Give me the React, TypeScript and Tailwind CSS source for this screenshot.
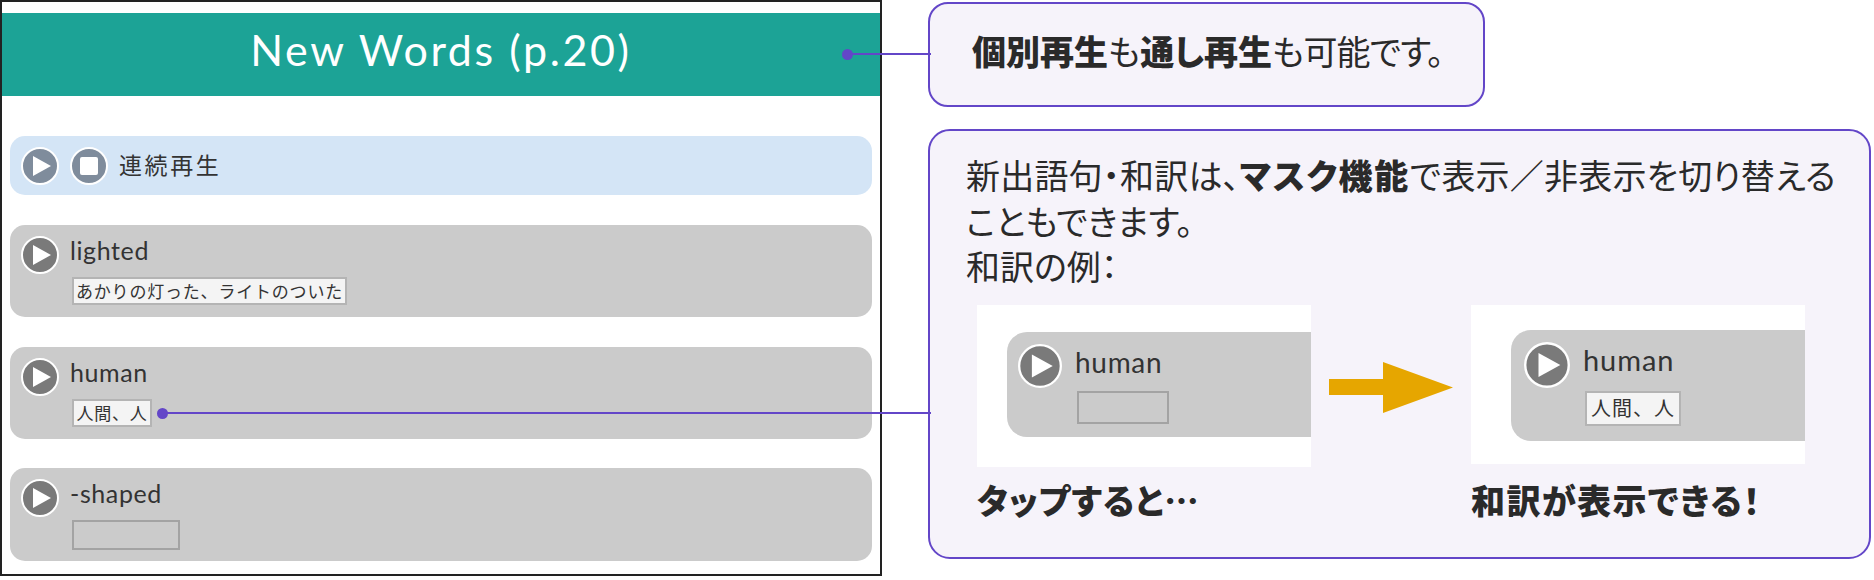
import React from "react";

const CJK = "font-['Noto_Sans_CJK_JP','Noto_Sans',sans-serif]";

function RoundButton({ className, fill = "#7a7a7a", stop = false }: { className: string; fill?: string; stop?: boolean }) {
  return (
    <svg viewBox="0 0 38 38" className={className}>
      <circle cx="19" cy="19" r="18" fill={fill} stroke="#ffffff" strokeWidth="2" />
      {stop ? <rect x="10" y="10" width="18" height="18" rx="2" fill="#ffffff" /> : <polygon points="12,9 30,19 12,29" fill="#ffffff" />}
    </svg>
  );
}

function WordRow({ word, meaning, maskClass, rowClass }: { word: string; meaning?: string; maskClass: string; rowClass: string }) {
  return (
    <div className={`flex rounded-[15px] bg-[#cbcbcb] pl-[11px] pt-[11px] ${rowClass}`}>
      <RoundButton className="h-[38px] w-[38px] shrink-0" />
      <div className="ml-[11px] flex flex-col items-start">
        <div className="flex h-[30px] items-center font-['Lato',sans-serif] text-[25px] tracking-[0.6px] text-[#333333]">{word}</div>
        <div
          className={`ml-[2px] mt-[11px] flex items-center justify-center border-2 ${meaning ? "border-[#b4b4b4] bg-[#f4f4f4]" : "border-[#a3a3a3]"} ${CJK} text-[17px] tracking-[0.8px] text-[#333333] ${maskClass}`}
        >
          {meaning}
        </div>
      </div>
    </div>
  );
}

export default function App() {
  return (
    <div className={`relative flex h-[580px] w-[1874px] overflow-hidden bg-white ${CJK} text-[#2a2a2a]`}>
      <div className="h-[576px] w-[882px] shrink-0 border-2 border-[#222222] bg-white pt-[11px]">
        <div className="flex h-[83px] items-center justify-center bg-[#1ca396] pb-[8px] font-['Lato',sans-serif] text-[43px] tracking-[2.6px] text-white">
          New Words (p.20)
        </div>
        <div className="mx-[8px] mt-[40px] flex flex-col">
          <div className="flex h-[59px] items-center gap-[11px] rounded-[15px] bg-[#d4e5f6] pl-[11px]">
            <RoundButton className="h-[38px] w-[38px] shrink-0" fill="#7f8c9c" />
            <RoundButton className="h-[38px] w-[38px] shrink-0" fill="#7f8c9c" stop />
            <span className="-mt-[3px] text-[23px] tracking-[2.6px] text-[#333333]">連続再生</span>
          </div>
          <WordRow word="lighted" meaning="あかりの灯った、ライトのついた" maskClass="h-[28px] w-[275px]" rowClass="mt-[30px] h-[92px]" />
          <WordRow word="human" meaning="人間、人" maskClass="h-[28px] w-[80px]" rowClass="mt-[30px] h-[92px]" />
          <WordRow word="-shaped" maskClass="h-[30px] w-[108px]" rowClass="mt-[29px] h-[93px]" />
        </div>
      </div>

      <div className="ml-[46px] flex flex-col pt-[2px]">
        <div className="flex h-[105px] w-[557px] rounded-[20px] border-2 border-[#6346c8] bg-[#f6f3fa] pl-[42px] pt-[24px] text-[34px] leading-[45px] [font-feature-settings:'palt']">
          <span><b className="font-black">個別再生</b>も<b className="font-black">通し再生</b><span className="tracking-[-0.8px]">も可能です。</span></span>
        </div>
        <div className="mt-[22px] h-[430px] w-[943px] rounded-[22px] border-2 border-[#6346c8] bg-[#f6f3fa] pl-[36px] pt-[21px]">
          <p className="text-[34px] leading-[45.5px] [font-feature-settings:'palt']">
            <span className="tracking-[0.2px]">新出語句・和訳は、</span><b className="font-black tracking-[1.6px]">マスク機能</b><span className="tracking-[0.2px]">で表示／非表示を切り替える</span><br />
            こともできます。<br />
            和訳の例：
          </p>
          <div className="ml-[11px] mt-[16px] flex items-start">
            <div className="flex w-[334px] flex-col">
              <div className="flex h-[162px] bg-white pl-[30px] pt-[27px]">
                <div className="flex h-[105px] flex-1 rounded-l-[20px] bg-[#cbcbcb] pl-[11px] pt-[12px]">
                  <RoundButton className="h-[44px] w-[44px] shrink-0" />
                  <div className="ml-[13px] flex flex-col items-start">
                    <div className="flex h-[36px] items-center font-['Lato',sans-serif] text-[28px] tracking-[0.7px] text-[#333333]">human</div>
                    <div className="ml-[2px] mt-[11px] h-[33px] w-[92px] border-2 border-[#a3a3a3]" />
                  </div>
                </div>
              </div>
              <div className="mt-[10px] text-[34px] font-black leading-[45px] tracking-[1px] [font-feature-settings:'palt']">タップすると…</div>
            </div>
            <svg viewBox="0 0 124 51" className="ml-[18px] mt-[57px] h-[51px] w-[124px] shrink-0">
              <polygon points="0,17 54,17 54,0 124,25.5 54,51 54,33 0,33" fill="#e6a600" />
            </svg>
            <div className="ml-[18px] flex w-[334px] flex-col">
              <div className="flex h-[159px] bg-white pl-[40px] pt-[25px]">
                <div className="flex h-[111px] flex-1 rounded-l-[20px] bg-[#cbcbcb] pl-[13px] pt-[12px]">
                  <RoundButton className="h-[46px] w-[46px] shrink-0" />
                  <div className="ml-[13px] flex flex-col items-start">
                    <div className="flex h-[36px] items-center font-['Lato',sans-serif] text-[29px] tracking-[0.9px] text-[#333333]">human</div>
                    <div className="ml-[2px] mt-[13px] flex h-[35px] w-[96px] items-center justify-center border-2 border-[#b4b4b4] bg-[#f4f4f4] text-[20px] tracking-[1px] text-[#333333]">人間、人</div>
                  </div>
                </div>
              </div>
              <div className="mt-[13px] text-[34px] font-black leading-[45px] tracking-[1.4px] [font-feature-settings:'palt']">和訳が表示できる！</div>
            </div>
          </div>
        </div>
      </div>

      <div className="absolute left-[847px] top-[53px] h-[2px] w-[84px] bg-[#6346c8]" />
      <div className="absolute left-[842px] top-[49px] h-[11px] w-[11px] rounded-full bg-[#6346c8]" />
      <div className="absolute left-[162px] top-[412px] h-[2px] w-[769px] bg-[#6346c8]" />
      <div className="absolute left-[157px] top-[407.5px] h-[11px] w-[11px] rounded-full bg-[#6346c8]" />
    </div>
  );
}
